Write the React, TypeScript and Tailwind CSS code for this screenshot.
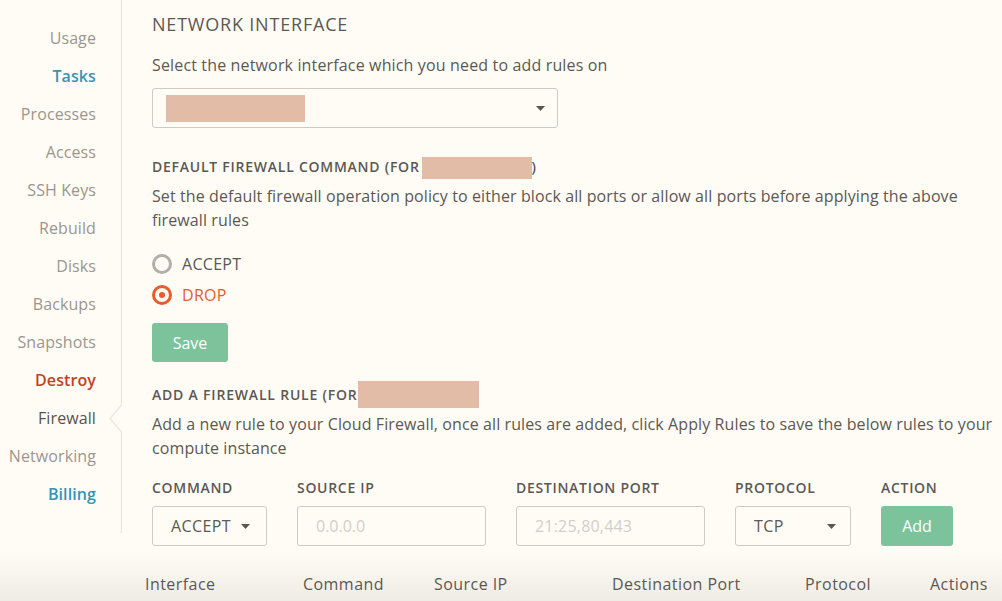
import React from "react";

const navItems: { label: string; cls: string }[] = [
  { label: "Usage", cls: "text-[#9b968e]" },
  { label: "Tasks", cls: "text-[#3a93b4] font-semibold" },
  { label: "Processes", cls: "text-[#9b968e]" },
  { label: "Access", cls: "text-[#9b968e]" },
  { label: "SSH Keys", cls: "text-[#9b968e]" },
  { label: "Rebuild", cls: "text-[#9b968e]" },
  { label: "Disks", cls: "text-[#9b968e]" },
  { label: "Backups", cls: "text-[#9b968e]" },
  { label: "Snapshots", cls: "text-[#9b968e]" },
  { label: "Destroy", cls: "text-[#c2411f] font-semibold" },
  { label: "Firewall", cls: "text-[#57534d]" },
  { label: "Networking", cls: "text-[#9b968e]" },
  { label: "Billing", cls: "text-[#3493b8] font-semibold" },
];

function Caret() {
  return (
    <svg width="9" height="5" viewBox="0 0 9 5" className="shrink-0">
      <path d="M0 0 L9 0 L4.5 5 Z" fill="#5a5650" />
    </svg>
  );
}

function Redact({ w, h }: { w: number; h: number }) {
  return <span className="inline-block bg-[#e2bca6] align-middle" style={{ width: w, height: h }} />;
}

export default function App() {
  return (
    <div
      className="w-[1002px] h-[601px] overflow-hidden flex bg-[#fffcf6] text-[#5c5852] relative"
      style={{ fontFamily: '"Open Sans", "Noto Sans", sans-serif' }}
    >
      {/* bottom shading */}
      <div className="absolute left-0 right-0 bottom-0 h-[50px] bg-gradient-to-b from-[#fffcf6] to-[#efece6] pointer-events-none" />

      {/* Sidebar */}
      <div className="w-[122px] shrink-0 relative">
        <div className="flex flex-col items-end pr-[26px] pt-[27px] gap-0 text-[16px] tracking-[0.1px]">
          {navItems.map((it) => (
            <div key={it.label} className={`h-[38px] leading-[22px] ${it.cls}`}>
              {it.label}
            </div>
          ))}
        </div>
        {/* vertical line with notch */}
        <svg className="absolute left-[100px] top-0" width="22" height="534" viewBox="0 0 22 534">
          <path d="M21.5 0 L21.5 405 L10 418.5 L21.5 432 L21.5 533" fill="none" stroke="#ece8e0" strokeWidth="1.5" />
        </svg>
      </div>

      {/* Main */}
      <div className="flex-1 pl-[30px] pt-[12px] relative">
        <div className="text-[18px] leading-[24px] tracking-[0.8px] text-[#5c5852]">NETWORK INTERFACE</div>
        <div className="mt-[17px] text-[16px] leading-[24px] tracking-[0.15px]">Select the network interface which you need to add rules on</div>
        <div className="mt-[11px] w-[406px] h-[40px] border border-[#cfcac2] rounded-[3px] flex items-center justify-between pl-[13px] pr-[12px]">
          <Redact w={139} h={27} />
          <Caret />
        </div>

        <div className="mt-[27px] text-[14px] leading-[24px] font-semibold tracking-[0.75px] flex items-center">
          DEFAULT FIREWALL COMMAND (FOR<span className="ml-[2px]"><Redact w={110} h={22} /></span>)
        </div>
        <div className="mt-[5px] text-[16px] leading-[24px] tracking-[0.1px] pr-[30px]">
          Set the default firewall operation policy to either block all ports or allow all ports before applying the above firewall rules
        </div>

        <div className="mt-[22px] flex flex-col gap-[11px]">
          <label className="flex items-center gap-[10px] h-[20px]">
            <span className="w-[20px] h-[20px] rounded-full border-[3px] border-[#b3aea6] bg-[#fffcf6]" />
            <span className="text-[16px] tracking-[0.3px] text-[#5c5852]">ACCEPT</span>
          </label>
          <label className="flex items-center gap-[10px] h-[20px]">
            <span className="w-[20px] h-[20px] rounded-full border-[3px] border-[#e95b2c] flex items-center justify-center">
              <span className="w-[6px] h-[6px] rounded-full bg-[#e95b2c]" />
            </span>
            <span className="text-[16px] tracking-[0.3px] text-[#e95b2c]">DROP</span>
          </label>
        </div>

        <button className="mt-[18px] w-[76px] h-[39px] rounded-[3px] bg-[#7cc39b] text-white text-[16px] block">Save</button>

        <div className="mt-[19px] text-[14px] leading-[24px] font-semibold tracking-[0.8px] flex items-center">
          ADD A FIREWALL RULE (FOR<Redact w={121} h={27} />
        </div>
        <div className="mt-[4px] text-[16px] leading-[24px] tracking-[0.1px] pr-0">
          Add a new rule to your Cloud Firewall, once all rules are added, click Apply Rules to save the below rules to your compute instance
        </div>

        <div className="mt-[20px] flex items-start">
          <div className="w-[145px]">
            <div className="text-[14px] leading-[16px] font-semibold tracking-[0.7px]">COMMAND</div>
            <div className="mt-[10px] w-[115px] h-[40px] border border-[#cfcac2] rounded-[3px] flex items-center pl-[18px] gap-[10px] text-[16px] tracking-[0.4px]">
              ACCEPT <Caret />
            </div>
          </div>
          <div className="w-[219px]">
            <div className="text-[14px] leading-[16px] font-semibold tracking-[0.7px]">SOURCE IP</div>
            <div className="mt-[10px] w-[189px] h-[40px] border border-[#cfcac2] rounded-[3px] flex items-center pl-[18px] text-[16px] text-[#d2cec8]">
              0.0.0.0
            </div>
          </div>
          <div className="w-[219px]">
            <div className="text-[14px] leading-[16px] font-semibold tracking-[0.7px]">DESTINATION PORT</div>
            <div className="mt-[10px] w-[189px] h-[40px] border border-[#cfcac2] rounded-[3px] flex items-center pl-[18px] text-[16px] tracking-[0.2px] text-[#d2cec8]">
              21:25,80,443
            </div>
          </div>
          <div className="w-[146px]">
            <div className="text-[14px] leading-[16px] font-semibold tracking-[0.7px]">PROTOCOL</div>
            <div className="mt-[10px] w-[116px] h-[40px] border border-[#cfcac2] rounded-[3px] flex items-center justify-between pl-[18px] pr-[14px] text-[16px] tracking-[0.4px]">
              TCP <Caret />
            </div>
          </div>
          <div>
            <div className="text-[14px] leading-[16px] font-semibold tracking-[0.7px]">ACTION</div>
            <button className="mt-[10px] w-[72px] h-[40px] rounded-[3px] bg-[#7cc39b] text-white text-[16px] block">Add</button>
          </div>
        </div>

        <div className="mt-[27px] -ml-[7px] grid grid-cols-[158px_131px_178px_193px_125px] text-[16px] leading-[22px] tracking-[0.45px] relative">
          <div>Interface</div>
          <div>Command</div>
          <div>Source IP</div>
          <div>Destination Port</div>
          <div>Protocol</div>
          <div className="absolute left-[785px]">Actions</div>
        </div>
      </div>
    </div>
  );
}
